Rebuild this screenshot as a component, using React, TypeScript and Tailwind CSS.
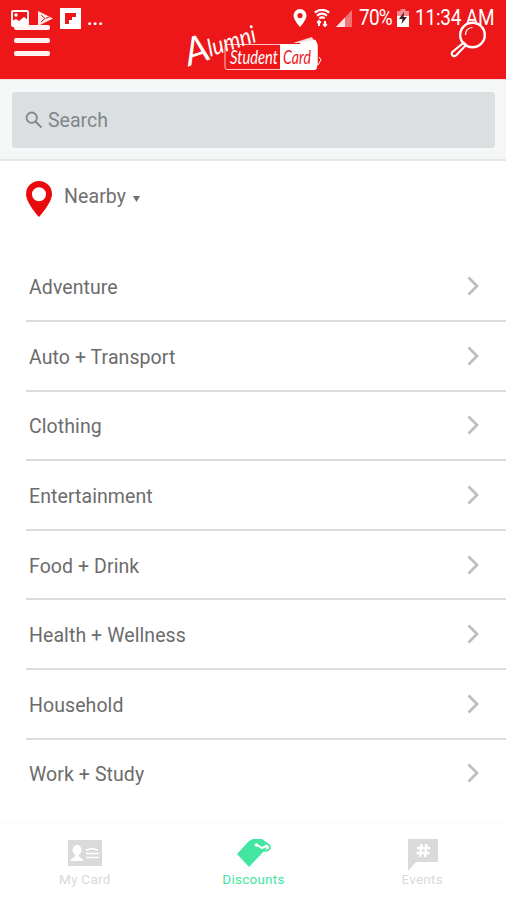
import type { ReactNode } from 'react'

const CATEGORIES = [
	'Adventure',
	'Auto + Transport',
	'Clothing',
	'Entertainment',
	'Food + Drink',
	'Health + Wellness',
	'Household',
	'Work + Study',
]

function StatusBar() {
	return (
		<div className="absolute inset-x-0 top-0 flex h-9 items-center justify-between pr-[11px] pl-[11px] text-white">
			<div className="flex items-center">
				<svg className="h-[17px] w-[18px]" viewBox="0 0 18 17" fill="none">
					<rect x="1" y="1" width="16" height="15" rx="1" stroke="currentColor" strokeWidth="1.8" />
					<path d="M1 11l4-2 3 2 5-4 4 3v6H1z" fill="currentColor" />
					<circle cx="5" cy="5" r="1.7" fill="currentColor" />
				</svg>
				<svg className="ml-2 h-[17px] w-[17px]" viewBox="0 0 17 17">
					<path d="M1 1l15 7.5L1 16z" fill="currentColor" opacity=".9" />
					<path d="M4 5l4 3.5L4 12M8.5 8.5l4-1.5" fill="none" stroke="#ed171a" strokeWidth="1" />
				</svg>
				<svg className="ml-[6px] h-[21px] w-[21px]" viewBox="0 0 21 21">
					<path d="M0 0h21v21H0z" fill="currentColor" />
					<path d="M5 5h11v4h-4v3H9v4H5z" fill="#ed171a" />
				</svg>
				<span className="ml-[6px] text-xl leading-5 font-medium">...</span>
			</div>

			<div className="flex items-center">
				<svg className="h-[18px] w-[14px]" viewBox="0 0 14 18">
					<path d="M7 0a6.5 6.5 0 0 0-6.5 6.5C.5 11 7 18 7 18s6.5-7 6.5-11.5A6.5 6.5 0 0 0 7 0zm0 4a2.6 2.6 0 1 1 0 5.2A2.6 2.6 0 0 1 7 4z" fill="currentColor" />
				</svg>
				<svg className="ml-[7px] h-[18px] w-4" viewBox="0 0 16 18" fill="none" stroke="currentColor">
					<path d="M.8 3.5Q8-1.8 15.2 3.5M3 6.6q5-3.8 10 0M5.3 9.4q2.7-2 5.4 0" strokeWidth="2.2" />
					<path d="M5 17v-5M11 12v5M3.3 14L5 12l1.7 2M9.3 15l1.7 2 1.7-2" strokeWidth="2" />
				</svg>
				<svg className="ml-[6px] h-[17px] w-4" viewBox="0 0 16 17" fill="currentColor">
					<path d="M16 0v17H0z" opacity=".4" />
					<path d="M9 7.5V17H0z" opacity=".8" />
				</svg>
				<span className="ml-[7px] w-[34px] scale-y-115 text-[19px] leading-5 tracking-[-.8px]">70%</span>
				<svg className="ml-1 h-[18px] w-3" viewBox="0 0 12 18">
					<path d="M3.5 0h5v2H12v5H0V2h3.5z" fill="currentColor" opacity=".5" />
					<path d="M0 7h12v11H0z" fill="currentColor" />
					<path d="M7 3l-5 7h3.5L4.5 15 10 8H6.5z" fill="#3d2020" />
				</svg>
				<span className="ml-[6px] w-20 scale-y-115 text-[19px] leading-5 tracking-[-.2px] whitespace-nowrap">11:34 AM</span>
			</div>
		</div>
	)
}

function Logo() {
	return (
		<svg className="h-[50px] w-[140px] overflow-visible" viewBox="184 23 140 50" fill="none">
			<path d="M293 43l19-6 3 6z" fill="#fff" fillOpacity=".85" />
			<path d="M300 43l15-3 2 4v22l-3 3" fill="#fff" stroke="#fff" />
			<path d="M317 45v20M319 57l2 3-3 5" stroke="#fff" />
			<rect x="225" y="44.5" width="91" height="25" rx="2" stroke="#fff" strokeOpacity=".75" />
			<path d="M280 44h37v23q0 3-3 3h-34z" fill="#fff" />
			<g transform="rotate(-18 190 66)" className="fill-white font-['Lato',sans-serif] italic">
				<text x="189" y="66" className="text-[38px]" textLength="24" lengthAdjust="spacingAndGlyphs">A</text>
				<text x="212" y="63.5" className="text-[24px]" textLength="50" lengthAdjust="spacingAndGlyphs">lumni</text>
			</g>
			<text x="230" y="64" textLength="48" lengthAdjust="spacingAndGlyphs" className="fill-white font-['Lato',sans-serif] text-[19px] italic">Student</text>
			<text x="283" y="64" textLength="28" lengthAdjust="spacingAndGlyphs" className="fill-[#ed171a] font-['Lato',sans-serif] text-[19px] italic">Card</text>
		</svg>
	)
}

function Header() {
	return (
		<header className="relative flex h-[79px] items-start justify-between bg-[#ed171a] pr-5 pl-[14px]">
			<div className="mt-[25px] flex w-9 flex-col gap-2">
				<span className="h-[5px] rounded-xs bg-white/95" />
				<span className="h-[5px] rounded-xs bg-white/95" />
				<span className="h-[5px] rounded-xs bg-white/95" />
			</div>
			<div className="mt-[23px] ml-[7px]">
				<Logo />
			</div>
			<svg className="mt-[19px] h-[39px] w-[36px]" viewBox="1 0 36 39" fill="none" stroke="#fff">
				<circle cx="23.5" cy="16" r="12.3" strokeWidth="2.4" />
				<path d="M16.5 16q0-7 7-7.5" strokeWidth="1.2" />
				<path d="M14.6 23.6l2.5 2.5L7 36.5q-2 1.4-3.5-.1t-.1-3.5z" strokeWidth="2.1" />
			</svg>
			<StatusBar />
		</header>
	)
}

function Tab({ label, active, children }: { label: string; active?: boolean; children: ReactNode }) {
	return (
		<a className={`flex flex-1 flex-col items-center ${active ? 'text-[#43e6a1]' : 'text-[#dadada]'}`}>
			<div className="flex h-[34px] items-start pl-[2px]">{children}</div>
			<span className="-mt-[2px] pl-px text-[13.5px] leading-4 tracking-[.25px]">{label}</span>
		</a>
	)
}

export default function App() {
	return (
		<div className="flex h-[900px] w-[506px] flex-col overflow-hidden bg-white font-['Roboto',sans-serif]">
			<Header />

			<div className="h-[82px] border-t border-b-2 border-t-[#fbdcdc] border-b-[#e6e7e7] bg-[#f5f6f6] pt-3 pr-[11px] pl-3">
				<div className="flex h-14 items-center rounded bg-[#dcdfe1] pl-[13px] text-[#7f868c]">
					<svg className="h-[18px] w-[18px]" viewBox="0 0 18 18" fill="none" stroke="currentColor" strokeWidth="1.8">
						<circle cx="6.7" cy="6.7" r="5.2" />
						<path d="M10.5 10.5l6 6" />
					</svg>
					<span className="mt-[2px] ml-[5px] text-[19.5px]">Search</span>
				</div>
			</div>

			<div className="flex h-[91.5px] items-start pt-5 pl-[26px] text-[#707070]">
				<svg className="h-9 w-[26px]" viewBox="0 0 26 36">
					<path d="M13 0A13 13 0 0 0 0 13c0 9 13 23 13 23s13-14 13-23A13 13 0 0 0 13 0zm0 6.2a7 7 0 1 1 0 14 7 7 0 0 1 0-14z" fill="#ea0a0e" />
				</svg>
				<span className="mt-1 ml-3 text-[19.5px] leading-6 tracking-[.1px]">Nearby</span>
				<svg className="mt-[15px] ml-[7px] h-[6px] w-[7px]" viewBox="0 0 7 6">
					<path d="M0 0h7L3.5 6z" fill="currentColor" />
				</svg>
			</div>

			<ul className="ml-[26px]">
				{CATEGORIES.map((name) => (
					<li
						className="flex h-[69.6px] items-center justify-between border-b-2 border-[#dcdcdc] pr-[27px] pl-[3px] text-[19.5px] tracking-[.08px] text-[#6c6c6c] last:border-transparent"
						key={name}
					>
						<span className="pt-[3px]">{name}</span>
						<svg className="h-5 w-3" viewBox="0 0 12 20" fill="none">
							<path d="M1.5 1.5L10 10l-8.5 8.5" stroke="#bcbfc2" strokeWidth="2.8" />
						</svg>
					</li>
				))}
			</ul>

			<nav className="mt-auto flex h-[78px] border-t border-[#f8f8f8] pt-4">
				<Tab label="My Card">
					<svg className="mt-px h-[26px] w-[34px]" viewBox="0 0 34 26">
						<path d="M0 0h34v26H0z" fill="currentColor" />
						<ellipse cx="9" cy="10" rx="4.5" ry="5" fill="#fff" />
						<path d="M7 13h4v4l4 2v2H3v-2l4-2z" fill="#fff" />
						<path d="M18 10l6-1.5 6 1.5M18 13.5h13M18 17.5h13" fill="none" stroke="#fff" strokeWidth="1.5" />
					</svg>
				</Tab>
				<Tab label="Discounts" active>
					<svg className="h-[28px] w-[34px]" viewBox="0 0 34 28">
						<path d="M0 15L12 2l4-2h9l4 3v7L12 28z" fill="currentColor" />
						<path d="M24 3q9 1 9 6-3 5-10 1" fill="none" stroke="currentColor" strokeWidth="1.8" />
						<circle cx="19.5" cy="6" r="1.8" fill="#fff" />
						<path d="M20 6l5 3 4-2 2 2" fill="none" stroke="#fff" strokeWidth="2" strokeLinecap="round" />
					</svg>
				</Tab>
				<Tab label="Events">
					<svg className="h-[32px] w-[30px]" viewBox="0 0 30 32">
						<path d="M0 0h30v23H8l-8 9z" fill="currentColor" />
						<path d="M13.5 5L12 18M18.5 5L17 18M9 9h13M8.5 14h13" fill="none" stroke="#fff" strokeWidth="2.4" />
					</svg>
				</Tab>
			</nav>
		</div>
	)
}
